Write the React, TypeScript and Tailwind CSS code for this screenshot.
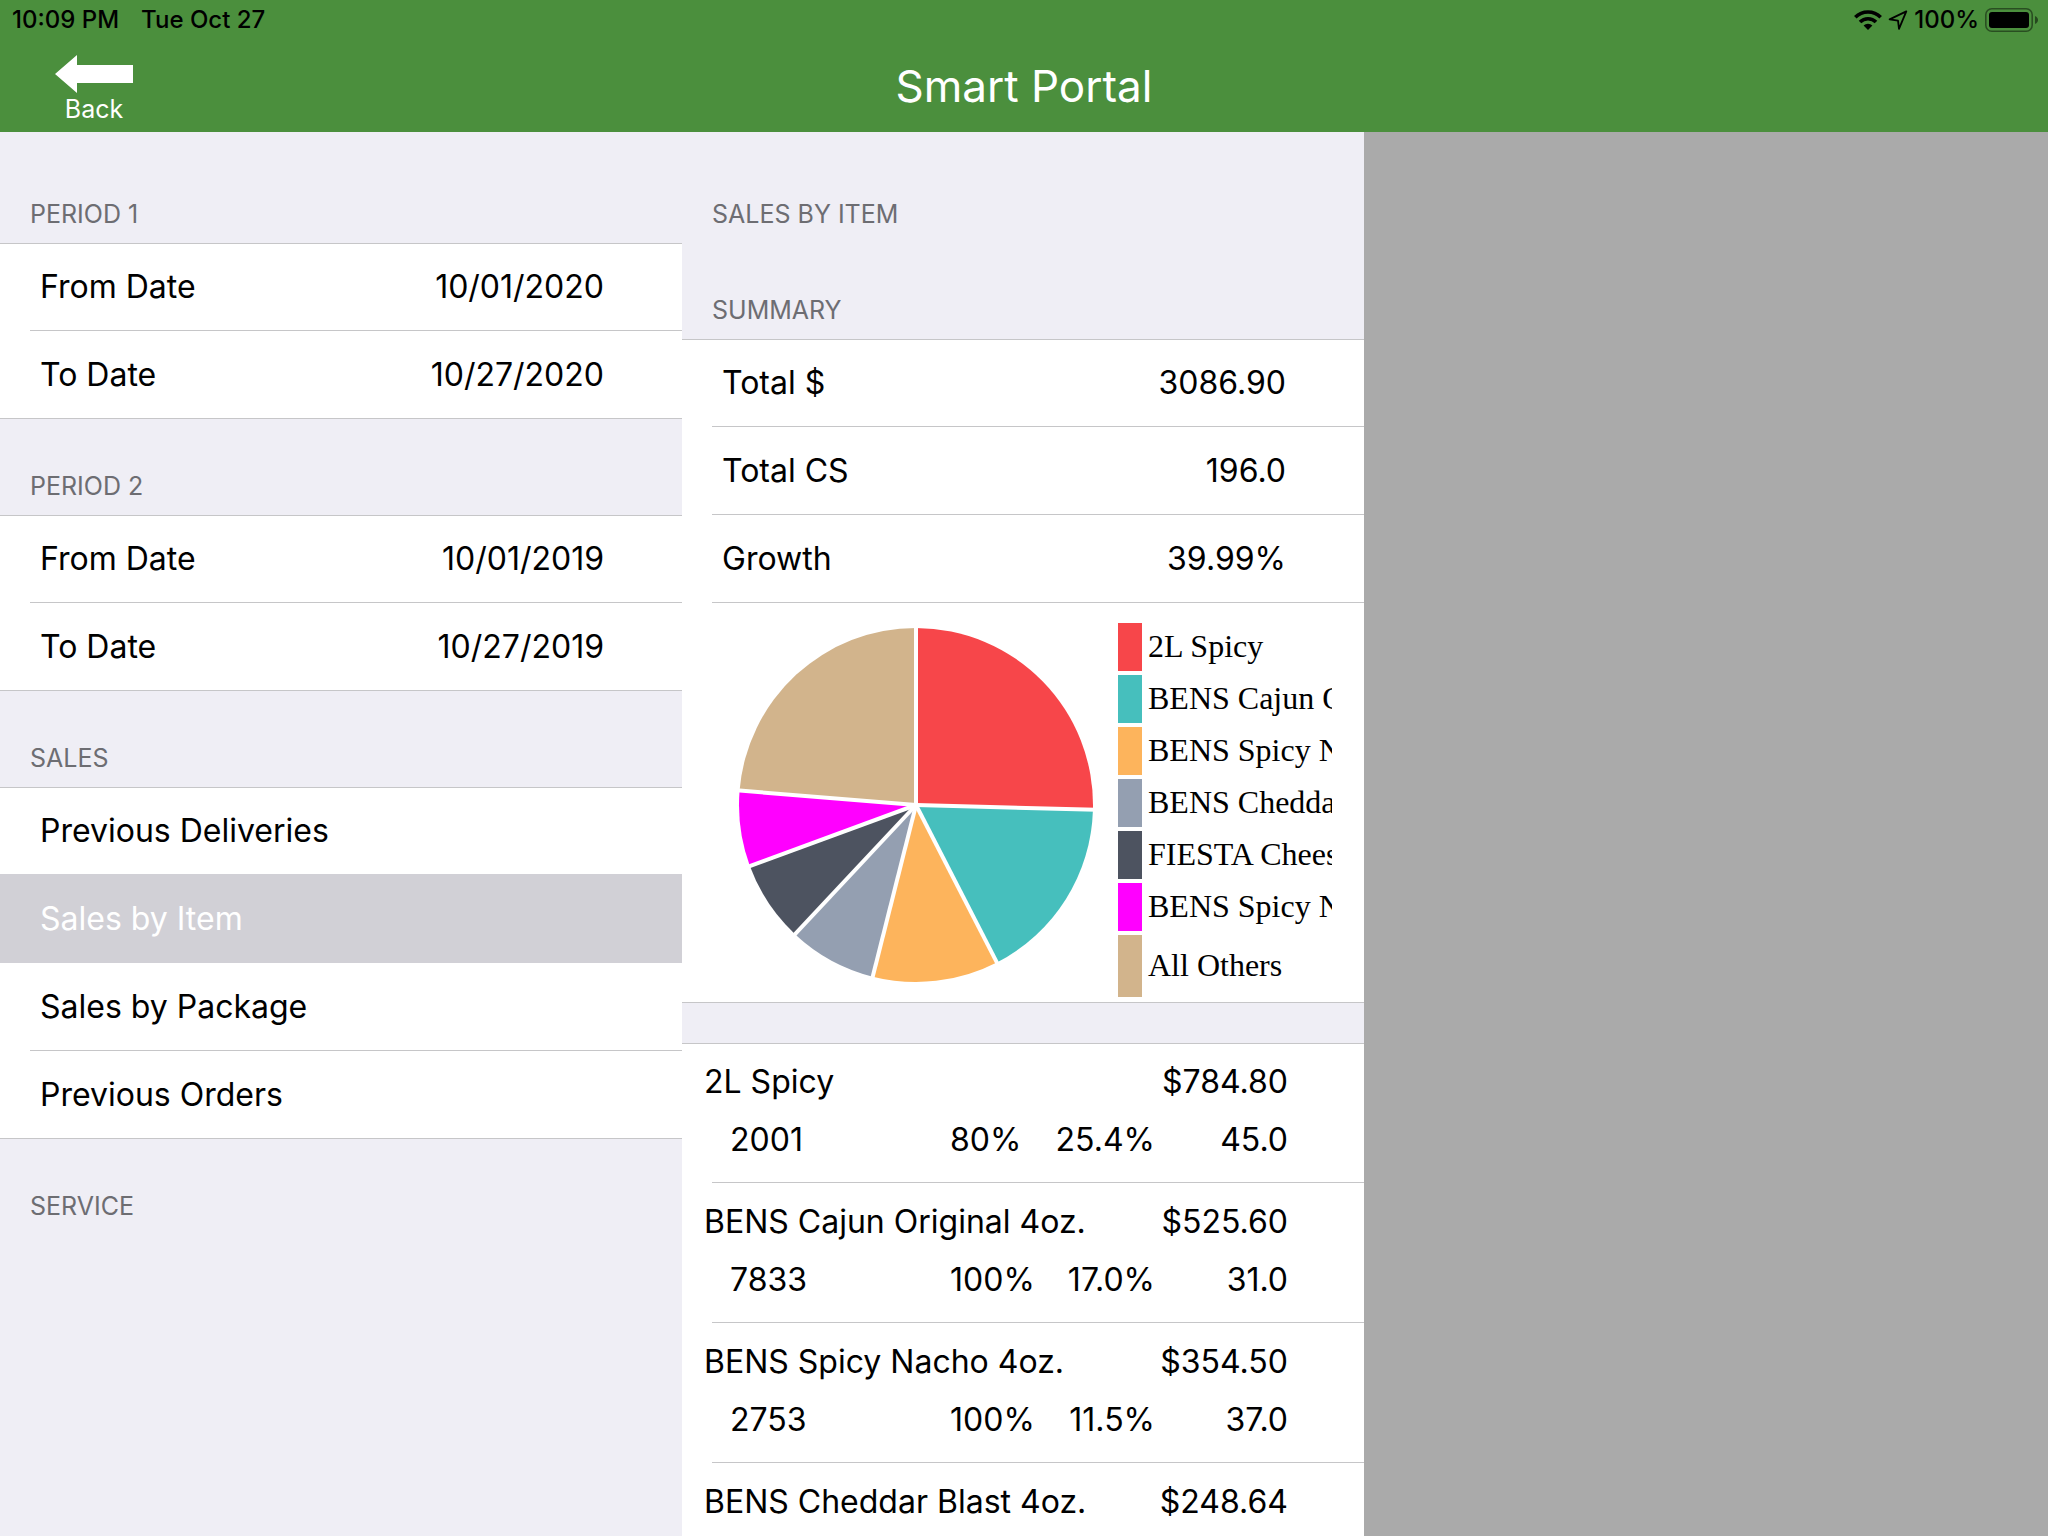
import React from "react";

interface Slice {
	label: string;
	value: number;
	color: string;
}

interface Item {
	name: string;
	code: string;
	total: string;
	growth: string;
	share: string;
	cases: string;
}

interface Field {
	label: string;
	value: string;
}

const period1: Field[] = [
	{ label: "From Date", value: "10/01/2020" },
	{ label: "To Date", value: "10/27/2020" },
];

const period2: Field[] = [
	{ label: "From Date", value: "10/01/2019" },
	{ label: "To Date", value: "10/27/2019" },
];

const summary: Field[] = [
	{ label: "Total $", value: "3086.90" },
	{ label: "Total CS", value: "196.0" },
	{ label: "Growth", value: "39.99%" },
];

const salesMenu = [
	"Previous Deliveries",
	"Sales by Item",
	"Sales by Package",
	"Previous Orders",
];

const slices: Slice[] = [
	{ label: "2L Spicy", value: 25.42, color: "#f7464a" },
	{ label: "BENS Cajun Original 4oz.", value: 17.03, color: "#46bfbd" },
	{ label: "BENS Spicy Nacho 4oz.", value: 11.48, color: "#fdb45c" },
	{ label: "BENS Cheddar Blast 4oz.", value: 8.05, color: "#949fb1" },
	{ label: "FIESTA Cheese", value: 7.42, color: "#4d5360" },
	{ label: "BENS Spicy Nacho", value: 6.9, color: "#ff00ff" },
	{ label: "All Others", value: 23.7, color: "#d2b48c" },
];

const items: Item[] = [
	{ name: "2L Spicy", code: "2001", total: "$784.80", growth: "80%", share: "25.4%", cases: "45.0" },
	{ name: "BENS Cajun Original 4oz.", code: "7833", total: "$525.60", growth: "100%", share: "17.0%", cases: "31.0" },
	{ name: "BENS Spicy Nacho 4oz.", code: "2753", total: "$354.50", growth: "100%", share: "11.5%", cases: "37.0" },
	{ name: "BENS Cheddar Blast 4oz.", code: "", total: "$248.64", growth: "", share: "", cases: "" },
];

const WifiIcon = () => (
	<svg viewBox="0 0 28 20" className="h-5 w-7" aria-hidden="true">
		<g fill="none" stroke="#000" strokeWidth="3.6">
			<path d="M1.3 7.2a18 18 0 0 1 25.4 0" />
			<path d="M6 12.1a11.3 11.3 0 0 1 16 0" />
		</g>
		<path d="M14 20l-4.4-4.4a6.2 6.2 0 0 1 8.8 0z" />
	</svg>
);

const LocationIcon = () => (
	<svg viewBox="0 0 20 20" className="h-5 w-5" aria-hidden="true">
		<path
			d="M18.3 1.400L1.600 9.400l8.400 1.200 1 8.200z"
			fill="none"
			stroke="#000"
			strokeWidth="1.8"
			strokeLinejoin="round"
		/>
	</svg>
);

const BatteryIcon = () => (
	<svg viewBox="0 0 54 24" className="h-6 w-[54px]" aria-hidden="true">
		<rect x="0.8" y="0.8" width="46.4" height="22.4" rx="6" fill="none" stroke="#000" strokeOpacity="0.45" strokeWidth="1.6" />
		<rect x="4" y="4" width="40" height="16" rx="3" />
		<path d="M50 8c4 1.4 4 6.600 0 8z" fillOpacity="0.5" />
	</svg>
);

const SectionHeader: React.FC<{ title: string; first?: boolean }> = ({ title, first }) => (
	<h2
		className={`flex items-end px-[30px] pb-[13px] text-[25px] leading-8 text-[#6d6d72] ${
			first ? "h-[111px]" : "h-24"
		}`}
	>
		{title}
	</h2>
);

const FieldList: React.FC<{ fields: Field[]; open?: boolean }> = ({ fields, open }) => (
	<dl className="bg-white">
		{fields.map((field, index) => {
			const last = index === fields.length - 1 && !open;
			return (
				<div
					key={field.label}
					className={`flex h-[88px] border-[#c6c6c8] ${index === 0 ? "border-t" : ""} ${
						last ? "border-b" : "pl-[30px]"
					}`}
				>
					<div
						className={`flex flex-1 items-center justify-between pr-[78px] ${
							last ? "pl-10" : "border-b border-[#c6c6c8] pl-[10px]"
						}`}
					>
						<dt>{field.label}</dt>
						<dd>{field.value}</dd>
					</div>
				</div>
			);
		})}
	</dl>
);

const SalesMenu: React.FC = () => (
	<ul className="bg-white">
		{salesMenu.map((label, index) => {
			const selected = label === "Sales by Item";
			const beforeSelected = salesMenu[index + 1] === "Sales by Item";
			const last = index === salesMenu.length - 1;
			const full = selected || beforeSelected || last;
			return (
				<li
					key={label}
					className={`flex h-[88px] ${index === 0 ? "border-t border-t-[#c6c6c8]" : ""} ${
						selected ? "bg-[#d1d0d6] text-white" : ""
					} ${full ? "" : "pl-[30px]"}`}
				>
					<button
						type="button"
						className={`flex-1 border-b text-left ${full ? "pl-10" : "pl-[10px]"} ${
							selected || beforeSelected ? "border-[#d1d0d6]" : "border-[#c6c6c8]"
						}`}
					>
						{label}
					</button>
				</li>
			);
		})}
	</ul>
);

const PieChart: React.FC = () => {
	const radius = 177;
	const total = slices.reduce((sum, slice) => sum + slice.value, 0);
	const point = (value: number, r: number) => {
		const angle = (value / total) * Math.PI * 2;
		return `${180 + r * Math.sin(angle)} ${180 - r * Math.cos(angle)}`;
	};
	const starts = slices.map((_, index) =>
		slices.slice(0, index).reduce((sum, slice) => sum + slice.value, 0)
	);

	return (
		<svg viewBox="0 0 360 360" className="mt-[2px] size-[360px] shrink-0" role="img" aria-label="Sales by item">
			{slices.map((slice, index) => (
				<path
					key={slice.label}
					d={`M180 180L${point(starts[index], radius)}A${radius} ${radius} 0 0 1 ${point(
						starts[index] + slice.value,
						radius
					)}Z`}
					fill={slice.color}
				/>
			))}
			{/* white gaps between the slices */}
			{starts.map((start) => (
				<path key={start} d={`M180 180L${point(start, 180)}`} stroke="#fff" strokeWidth="4" />
			))}
		</svg>
	);
};

const Legend: React.FC = () => (
	<ul className="flex min-w-0 flex-1 flex-col gap-1 overflow-hidden font-['Liberation_Serif',serif] text-[32px]">
		{slices.map((slice) => (
			<li
				key={slice.label}
				className={`flex items-center gap-[6px] whitespace-nowrap leading-[46px] ${
					slice.label === "All Others" ? "h-[62px]" : "h-12"
				}`}
			>
				<span className="w-6 shrink-0 self-stretch" style={{ backgroundColor: slice.color }} />
				<span className="pb-[2px]">{slice.label}</span>
			</li>
		))}
	</ul>
);

const ItemRow: React.FC<{ item: Item; first: boolean }> = ({ item, first }) => (
	<li className={first ? "border-t border-[#c6c6c8]" : ""}>
		<div className={`pr-[76px] pl-[22px] leading-[58px] ${first ? "pt-[9px]" : "pt-[10px]"}`}>
			<div className="flex justify-between">
				<span>{item.name}</span>
				<span>{item.total}</span>
			</div>
			<div className="grid h-[58px] grid-cols-[220fr_205fr_133fr] pl-[26px]">
				<span>{item.code}</span>
				<span className="flex justify-between">
					<span>{item.growth}</span>
					<span>{item.share}</span>
				</span>
				<span className="text-right">{item.cases}</span>
			</div>
		</div>
		<div className="ml-[30px] h-[14px] border-b border-[#c6c6c8]" />
	</li>
);

const App: React.FC = () => {
	return (
		<div className="flex h-screen flex-col overflow-hidden bg-[#aaaaaa] font-[Inter,sans-serif] text-[32px] text-black">
			<header className="shrink-0 bg-[#4b8f3d]">
				<div className="flex h-10 items-center justify-between pr-[9px] pl-3 text-2xl font-medium">
					<div className="flex gap-[22px]">
						<span>10:09 PM</span>
						<span>Tue Oct 27</span>
					</div>
					<div className="flex items-center gap-[6px]">
						<WifiIcon />
						<LocationIcon />
						<span>100%</span>
						<BatteryIcon />
					</div>
				</div>
				<div className="grid h-[92px] grid-cols-3 items-center text-white">
					<button type="button" className="ml-[54px] flex w-20 flex-col items-center pt-2 text-[25px] leading-8">
						<svg viewBox="0 0 78 38" className="h-[38px] w-[78px]" aria-hidden="true">
							<path d="M0 19L22 0V10H78V28H22V38Z" fill="#fff" />
						</svg>
						Back
					</button>
					<h1 className="text-center text-[44px]">Smart Portal</h1>
				</div>
			</header>
			<main className="grid min-h-0 flex-1 grid-cols-[341fr_341fr_342fr]">
				<nav className="overflow-hidden bg-[#efeef5]">
					<SectionHeader title="PERIOD 1" first />
					<FieldList fields={period1} />
					<SectionHeader title="PERIOD 2" />
					<FieldList fields={period2} />
					<SectionHeader title="SALES" />
					<SalesMenu />
					<SectionHeader title="SERVICE" />
				</nav>
				<section className="overflow-hidden bg-[#efeef5]">
					<SectionHeader title="SALES BY ITEM" first />
					<SectionHeader title="SUMMARY" />
					<FieldList fields={summary} open />
					<div className="flex h-[400px] gap-[22px] border-b border-[#c6c6c8] bg-white pt-5 pr-8 pl-[54px]">
						<PieChart />
						<Legend />
					</div>
					<ul className="mt-10 bg-white">
						{items.map((item, index) => (
							<ItemRow key={item.name} item={item} first={index === 0} />
						))}
					</ul>
				</section>
			</main>
		</div>
	);
};

export default App;
